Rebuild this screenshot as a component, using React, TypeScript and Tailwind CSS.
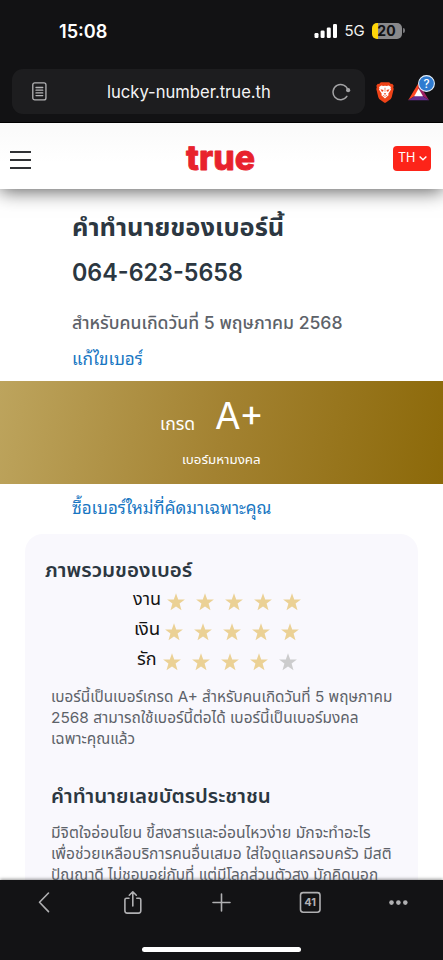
import React from "react";

const THAI = "font-['Inter','Noto_Sans_Thai','Noto_Sans','Liberation_Sans',sans-serif]";
const LOOPED = "font-['Noto_Sans_Thai_Looped','Loma','Garuda','Inter','Noto_Sans_Thai','Noto_Sans',sans-serif]";

function Line({ className = "", children }: { className?: string; children: React.ReactNode }) {
  return (
    <div className="flex">
      <span className={`block origin-left whitespace-nowrap ${className}`}>{children}</span>
    </div>
  );
}

function StatusBar() {
  return (
    <div className="flex h-[61px] items-center pl-[59px] pr-[38px]">
      <div className="w-[255px] origin-left text-[18.5px] font-semibold leading-6 text-white">
        <span className="inline-block origin-left scale-x-[.98]">15:08</span>
      </div>
      <svg width="23" height="14" viewBox="0 0 23 14" fill="#fff">
        <rect x="0.5" y="9" width="4" height="5" rx="1.2" />
        <rect x="6.6" y="6.5" width="4" height="7.5" rx="1.2" />
        <rect x="12.8" y="3.5" width="4" height="10.5" rx="1.2" />
        <rect x="19" y="0" width="4" height="14" rx="1.2" />
      </svg>
      <span className="ml-[7.5px] w-[27px] text-[15px] leading-6 text-[#f2f2f2]">5G</span>
      <div className="flex h-[16px] w-[30px] items-center justify-center overflow-hidden rounded-[5px] bg-linear-to-r from-[#ffd60a] from-[20%] to-[#89898b] to-[20%] text-[14px] font-bold leading-none text-[#111113]">
        20
      </div>
      <div className="ml-px h-[5px] w-[2px] rounded-r-full bg-[#77777a]" />
    </div>
  );
}

function AddressBar() {
  return (
    <div className="flex h-[61px] items-start pl-[12px] pt-[8px]">
      <div className="flex h-[45px] w-[353px] items-center rounded-[11px] bg-[#1d1d1f] pl-[20px] pr-[13px]">
        <svg width="15" height="19" viewBox="0 0 15 19" fill="none" stroke="#b4b4b6" strokeWidth="1.3" strokeLinecap="round">
          <rect x="0.8" y="0.8" width="13.2" height="17.2" rx="2" />
          <path d="M4 5.5h6.8M4 8.2h6.8M4 10.9h6.8M4 13.6h6.8" />
        </svg>
        <span className="ml-[60px] w-[226px] origin-left scale-x-[.976] whitespace-nowrap text-[17px] leading-6 text-[#f4f4f5]">lucky-number.true.th</span>
        <svg width="20" height="18" viewBox="0 0 20 18" fill="none">
          <path d="M16 7.2A7.6 7.6 0 1 0 14.9 13.4" stroke="#a4a4a6" strokeWidth="1.5" strokeLinecap="round" />
          <circle cx="16.2" cy="7.2" r="2.1" fill="#a4a4a6" />
        </svg>
      </div>
      <div className="ml-[11px] mt-[12px] flex h-[22px] w-[18px] items-center justify-center">
        <svg width="18" height="21" viewBox="0 0 18 21">
          <path d="M4.8.3h8.4l1.7 1.8 1.3-.3 1.5 2-.5 1.4.5 1.7-2 8.3-.9 1.7-4.5 3.3-1.3.7-1.3-.7-4.5-3.3-.9-1.7-2-8.3.5-1.7-.5-1.4 1.5-2 1.3.3z" fill="#ef4318" />
          <path d="m3.1 5.1 2.2-1.6 1.9.6L9 3.8l1.8.3 1.9-.6 2.2 1.6-.4 1.5.5 1-2.7 4.1.3 1.6-2 1.6L9 16.5l-1.6-1.6-2-1.6.3-1.6L3 7.6l.5-1z" fill="#fff" />
          <path d="m4.5 7.3 3 .6-.4 1.5-1.2.3zm9 0-3 .6.4 1.5 1.2.3zM7.7 11.7 9 11l1.3.7L9 12.8zM8.6 5.8h.8L9.2 10h-.4zM6.8 13l2.2 1 2.2-1-.5.9-1.7.7-1.7-.7z" fill="#ef4318" />
        </svg>
      </div>
      <svg className="ml-[14px] mt-[5px]" width="28" height="27" viewBox="0 0 28 27">
        <path d="M10.5 9 .2 26.3l7-4.6 3.6-6.8z" fill="#ff4724" />
        <path d="M10.5 9 21 26.3l-7-4.6-3.2-6.8z" fill="#9e1f63" />
        <path d="M.2 26.3H21l-7-4.6H7.2z" fill="#662d91" />
        <path d="m10.6 14.6 4.4 7.7H6.2z" fill="#fff" />
        <circle cx="18.5" cy="9.5" r="7.9" fill="#2f7bd0" stroke="#e4eef8" strokeWidth="1.1" />
        <text x="18.5" y="13.5" textAnchor="middle" fontSize="11.5" fontFamily="Inter, sans-serif" fontWeight="500" fill="#fff">?</text>
      </svg>
    </div>
  );
}

function SiteHeader() {
  return (
    <header className="relative z-10 flex h-[66px] items-center bg-linear-to-b from-[#fafafa] to-white to-60% pl-[10px] shadow-[0_2px_18px_rgba(0,0,0,0.65)]">
      <div className="mt-[7px] flex w-[21px] flex-col gap-[6px]">
        <div className="h-[2px] bg-[#303235]" />
        <div className="h-[2px] bg-[#303235]" />
        <div className="h-[2px] bg-[#303235]" />
      </div>
      <svg className="ml-[153px] mt-[3px] overflow-visible" width="74" height="46" viewBox="0 -6 74 46">
        <text x="2" y="28.5" textLength="69" lengthAdjust="spacingAndGlyphs" fontFamily="Inter, sans-serif" fontWeight="800" fontSize="34" fill="#e8222d" stroke="#e8222d" strokeWidth="0.8" strokeLinejoin="round">true</text>
      </svg>
      <div className="ml-[135px] mt-[5px] flex h-[25px] w-[38px] items-center rounded-[4px] bg-[#fd2419] pl-[5px] text-white">
        <span className="w-[21px] text-[12.5px] leading-none">TH</span>
        <svg width="8" height="5" viewBox="0 0 8 5" fill="none" stroke="#fff" strokeWidth="1.4"><path d="m.6.6 3.4 3.2L7.4.6" /></svg>
      </div>
    </header>
  );
}

function Stars({ on }: { on: number }) {
  return (
    <div className="flex gap-[11px]">
      {[0, 1, 2, 3, 4].map((i) => (
        <svg key={i} width="18" height="18" viewBox="0 0 18 18" fill={i < on ? "#ebd195" : "#cccccd"}>
          <path d="m9 .2 2.2 6.2 6.7.2-5.3 4 1.9 6.6L9 13.4l-5.5 3.8 1.9-6.6-5.3-4 6.7-.2z" />
        </svg>
      ))}
    </div>
  );
}

function Overview() {
  return (
    <section className="mx-[25px] mt-[14px] h-[400px] rounded-t-[18px] bg-[#f9f8fd] pt-[22px]">
      <div className="pl-[20px]"><Line className="scale-x-[1.028] text-[20px] font-semibold leading-[28px] text-[#2c3741]">ภาพรวมของเบอร์</Line></div>
      <div className="pl-[108px] text-[18px] leading-[24px] text-[#131313]">
        <div className="flex h-[30px]"><div className="w-[34px] pt-[3px]"><Line>งาน</Line></div><div className="pt-[9px]"><Stars on={5} /></div></div>
        <div className="flex h-[30px]"><div className="w-[32px] pl-[0.5px] pt-[3px]"><Line className="scale-x-[1.04]">เงิน</Line></div><div className="pt-[9px]"><Stars on={5} /></div></div>
        <div className="flex h-[30px] pl-[4px]"><div className="w-[26px] pt-[3px]"><Line>รัก</Line></div><div className="pt-[9px]"><Stars on={4} /></div></div>
      </div>
      <div className="pl-[26px] pt-[12px] text-[#5d6269]">
        <Line className="scale-x-[1.018] text-[15px] leading-[21px]">เบอร์นี้เป็นเบอร์เกรด A+ สำหรับคนเกิดวันที่ 5 พฤษภาคม</Line>
        <Line className="scale-x-[1.027] text-[15px] leading-[21px]">2568 สามารถใช้เบอร์นี้ต่อได้ เบอร์นี้เป็นเบอร์มงคล</Line>
        <Line className="scale-x-[1.024] text-[15px] leading-[21px]">เฉพาะคุณแล้ว</Line>
      </div>
      <div className="pl-[25.5px] pt-[32px]"><Line className="scale-x-[1.023] text-[20px] font-semibold leading-[30px] text-[#2c3741]">คำทำนายเลขบัตรประชาชน</Line></div>
      <div className="pl-[25.5px] pt-[11px] text-[#5d6269]">
        <Line className="scale-x-[1.042] text-[15px] leading-[21px]">มีจิตใจอ่อนโยน ขี้สงสารและอ่อนไหวง่าย มักจะทำอะไร</Line>
        <Line className="scale-x-[1.037] text-[15px] leading-[21px]">เพื่อช่วยเหลือบริการคนอื่นเสมอ ใส่ใจดูแลครอบครัว มีสติ</Line>
        <Line className="scale-x-[1.022] text-[15px] leading-[21px]">ปัญญาดี ไม่ชอบอยู่กับที่ แต่มีโลกส่วนตัวสูง มักคิดนอก</Line>
      </div>
    </section>
  );
}

function BottomBar() {
  return (
    <footer className="h-[80px] shrink-0 bg-[#131315] shadow-[0_-1px_3px_rgba(0,0,0,0.4)]">
      <svg width="443" height="50" viewBox="0 0 443 50" fill="none" stroke="#b0b0b2" strokeWidth="1.6" strokeLinecap="round" strokeLinejoin="round">
        <path d="M48.5 13 39.5 22.3l9 9.3" />
        <path d="M129 18.2h-2.5q-1.6 0-1.6 1.6v11q0 2.3 2.3 2.3h11.3q2.3 0 2.3-2.3v-11q0-1.6-1.6-1.6H136.8M132.8 26V12.2M129.3 15.2l3.5-3.4 3.5 3.4" />
        <path d="M213 22.5h17M221.5 14v17" />
        <rect x="300.5" y="12.6" width="19.5" height="19.6" rx="2.6" />
        <text x="310.2" y="26.4" textAnchor="middle" stroke="none" fill="#b0b0b2" fontFamily="Inter, sans-serif" fontWeight="700" fontSize="11">41</text>
        <g stroke="none" fill="#b0b0b2"><circle cx="391.5" cy="22.6" r="2.3" /><circle cx="398.4" cy="22.6" r="2.3" /><circle cx="405.3" cy="22.6" r="2.3" /></g>
      </svg>
      <div className="mx-auto mt-[17px] h-[5px] w-[159px] rounded-full bg-white" />
    </footer>
  );
}

export default function App() {
  return (
    <div className={`flex h-[960px] w-[443px] flex-col overflow-hidden bg-white ${THAI}`}>
      <div className="h-[123px] shrink-0 border-b border-black bg-[#121214]">
        <StatusBar />
        <AddressBar />
      </div>
      <main className="h-[757px] shrink-0 overflow-hidden">
        <SiteHeader />
        <div className="h-[192px] pl-[72px] pt-[21px]">
          <Line className="scale-x-[1.06] text-[24px] font-bold leading-[36px] text-[#2c3741]">คำทำนายของเบอร์นี้</Line>
          <Line className="mt-[10px] scale-x-[.971] text-[24px] font-semibold leading-[34px] text-[#2c3741]">064-623-5658</Line>
          <Line className="mt-[21px] scale-x-[1.035] text-[17px] font-medium leading-[24px] text-[#5d6269]">สำหรับคนเกิดวันที่ 5 พฤษภาคม 2568</Line>
          <Line className={`mt-[11px] text-[17px] leading-[24px] text-[#1776c2] ${LOOPED}`}>แก้ไขเบอร์</Line>
        </div>
        <div className="h-[103px] bg-linear-[100deg,#bda45d_0%,#a38231_50%,#8c6909_100%] text-white">
          <div className="flex h-[67px] pl-[160px]">
            <div className="w-[55px] pt-[31px]"><Line className="scale-x-[1.03] text-[17px] leading-[24px]">เกรด</Line></div>
            <div className="pt-[15px]"><Line className="text-[37px] leading-[40px]">A+</Line></div>
          </div>
          <div className="pl-[182px]"><Line className="scale-x-[1.026] text-[13px] leading-[22px]">เบอร์มหามงคล</Line></div>
        </div>
        <div className="pl-[72px] pt-[9px]"><Line className={`scale-x-[.995] text-[17px] leading-[27px] text-[#1776c2] ${LOOPED}`}>ซื้อเบอร์ใหม่ที่คัดมาเฉพาะคุณ</Line></div>
        <Overview />
      </main>
      <BottomBar />
    </div>
  );
}
